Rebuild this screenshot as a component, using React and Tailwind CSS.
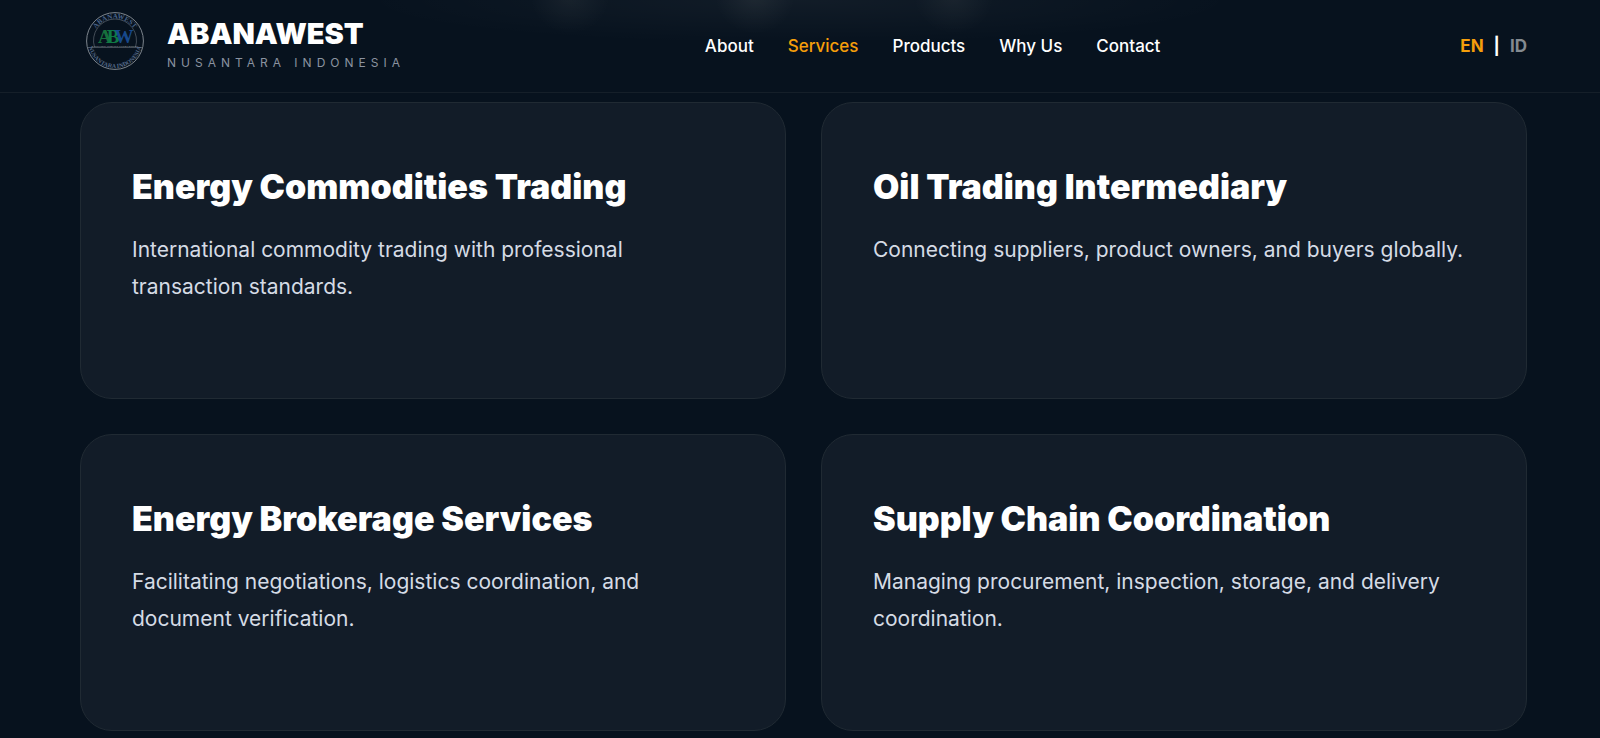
import React from "react";

const navLinks = [
  { label: "About", href: "#about" },
  { label: "Services", href: "#services", active: true },
  { label: "Products", href: "#products" },
  { label: "Why Us", href: "#why-us" },
  { label: "Contact", href: "#contact" },
];

const services = [
  {
    title: "Energy Commodities Trading",
    text: "International commodity trading with professional transaction standards.",
  },
  {
    title: "Oil Trading Intermediary",
    text: "Connecting suppliers, product owners, and buyers globally.",
  },
  {
    title: "Energy Brokerage Services",
    text: "Facilitating negotiations, logistics coordination, and document verification.",
  },
  {
    title: "Supply Chain Coordination",
    text: "Managing procurement, inspection, storage, and delivery coordination.",
  },
];

function Logo() {
  return (
    <svg viewBox="0 0 60 60" className="size-[60px] shrink-0" aria-hidden="true">
      <defs>
        <path id="logo-top" d="M7.5 30a22.5 22.5 0 0 1 45 0" />
        <path id="logo-bottom" d="M3 30a27 27 0 0 0 54 0" />
      </defs>
      <circle cx="30" cy="30" r="28.4" fill="none" stroke="#7d858d" strokeWidth="1" />
      <path d="M9.5 36a21.5 21.5 0 1 1 41 0" fill="none" stroke="#5b646e" strokeWidth="0.7" />
      <path d="M2.5 36.5H57.5" stroke="#5b646e" strokeWidth="0.7" />
      <g fontFamily="Liberation Serif, serif" fontWeight="700">
        <text fontSize="7" fill="#4a648a" textAnchor="middle">
          <textPath href="#logo-top" startOffset="50%">ABANAWEST</textPath>
        </text>
        <text fontSize="6" fill="#566b8a" textAnchor="middle">
          <textPath href="#logo-bottom" startOffset="50%">NUSANTARA INDONESIA</textPath>
        </text>
        <text x="13" y="32" fontSize="19" fill="#16703c">
          A
          <tspan dx="-5" fill="#0f7a45">B</tspan>
          <tspan dx="-5" fill="#17498c">W</tspan>
        </text>
        <text x="30" y="35.5" fontSize="2.6" fill="#8f989c" textAnchor="middle">
          FANTASTIC SERVICE EVERYWHERE
        </text>
      </g>
    </svg>
  );
}

function Header() {
  return (
    <header className="relative flex items-center justify-between overflow-hidden border-b border-[#151f29] pt-[11px] pr-[73px] pb-[17px] pl-[85px]">
      <div className="pointer-events-none absolute inset-x-0 -top-10 h-20 bg-[radial-gradient(440px_44px_at_50%_50%,rgba(255,255,255,0.045),transparent),radial-gradient(40px_38px_at_570px_36px,rgba(255,255,230,0.05),transparent),radial-gradient(40px_38px_at_755px_36px,rgba(255,255,230,0.06),transparent),radial-gradient(40px_38px_at_954px_36px,rgba(255,255,230,0.05),transparent)]" />
      <a href="#home" className="relative flex items-start gap-[22px]">
        <Logo />
        <span className="flex flex-col pt-[7px]">
          <span className="text-[29px] leading-8 font-black">ABANAWEST</span>
          <span className="text-xs leading-[25px] tracking-[5px] whitespace-nowrap text-[#8b93a0]">
            NUSANTARA INDONESIA
          </span>
        </span>
      </a>
      <nav className="relative flex gap-[34px] pt-2 text-[17px] font-medium">
        {navLinks.map((link) => (
          <a key={link.label} href={link.href} className={link.active ? "text-[#f59e0b]" : ""}>
            {link.label}
          </a>
        ))}
      </nav>
      <div className="relative flex gap-[10px] pt-2 text-[17px] font-bold">
        <button type="button" className="text-[#f59e0b]">EN</button>
        <span>|</span>
        <button type="button" className="text-[#848a90]">ID</button>
      </div>
    </header>
  );
}

function ServiceCard({ title, text }) {
  return (
    <article className="min-h-[297px] rounded-[32px] border border-[#202a33] bg-[#121c28] px-[51px] pt-[60px] pb-12">
      <h2 className="text-[34px] leading-[48px] font-black">{title}</h2>
      <p className="mt-5 text-[21px] leading-[37px] text-[#d5dbe5]">{text}</p>
    </article>
  );
}

export default function App() {
  return (
    <div className="min-h-screen bg-[#07121e] font-[Inter,sans-serif] text-white">
      <Header />
      <main className="grid grid-cols-2 gap-[35px] pt-[9px] pr-[73px] pb-[7px] pl-20">
        {services.map((service) => (
          <ServiceCard key={service.title} {...service} />
        ))}
      </main>
    </div>
  );
}
